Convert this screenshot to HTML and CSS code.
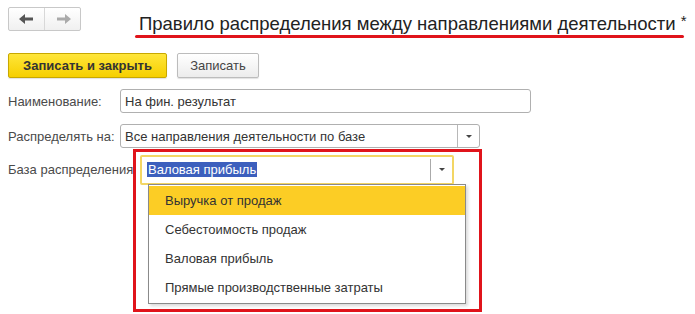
FILE: index.html
```html
<!DOCTYPE html>
<html lang="ru">
<head>
<meta charset="utf-8">
<link rel="stylesheet" href="styles.css">
</head>
<body>
<div class="page">
  <div class="header">
    <div class="nav">
      <div class="nav-btn">
        <svg width="16" height="10" viewBox="0 0 16 10"><path d="M0 5 L6 0 L6 3.5 L14 3.5 L14 6.5 L6 6.5 L6 10 Z" fill="#555"/></svg>
      </div>
      <div class="nav-btn">
        <svg width="16" height="10" viewBox="0 0 16 10"><path d="M16 5 L10 0 L10 3.5 L2 3.5 L2 6.5 L10 6.5 L10 10 Z" fill="#aaa"/></svg>
      </div>
    </div>
    <div class="title">Правило распределения между направлениями деятельности <span class="star">*</span></div>
  </div>
  <div class="toolbar">
    <button class="btn btn-primary">Записать и закрыть</button>
    <button class="btn">Записать</button>
  </div>
  <div class="form">
    <div class="row">
      <div class="label">Наименование:</div>
      <div class="input input-name">На фин. результат</div>
    </div>
    <div class="row">
      <div class="label">Распределять на:</div>
      <div class="input input-select">
        <span class="value">Все направления деятельности по базе</span>
        <span class="drop"><span class="tri"></span></span>
      </div>
    </div>
    <div class="row row-base">
      <div class="label label-base">База распределения</div>
      <div class="focus-wrap">
        <div class="input input-focus">
          <span class="value"><span class="sel">Валовая прибыль</span></span>
          <span class="drop"><span class="tri"></span></span>
        </div>
        <ul class="list">
          <li class="item active">Выручка от продаж</li>
          <li class="item">Себестоимость продаж</li>
          <li class="item">Валовая прибыль</li>
          <li class="item">Прямые производственные затраты</li>
        </ul>
      </div>
      <div class="annot"></div>
    </div>
  </div>
</div>
</body>
</html>
```

FILE: styles.css
```css
* { box-sizing: border-box; }
html, body { margin: 0; padding: 0; background: #fff; }
body {
  font-family: "Liberation Sans", Arial, sans-serif;
  font-size: 13px;
  color: #444;
  width: 695px;
  height: 314px;
  overflow: hidden;
}
.page { padding: 7px 8px 0 8px; }
.header { display: flex; align-items: flex-start; height: 46px; }
.nav {
  display: flex;
  width: 73px;
  height: 24px;
  border: 1px solid #c8c8c8;
  border-radius: 2px;
  background: linear-gradient(#ffffff, #f0f0f0);
}
.nav-btn {
  flex: 1;
  display: flex;
  align-items: center;
  justify-content: center;
}
.nav-btn + .nav-btn { border-left: 1px solid #d8d8d8; }
.title {
  margin-left: 58px;
  margin-top: 3px;
  font-size: 18.5px;
  color: #222;
  line-height: 22px;
  position: relative;
  white-space: nowrap;
}
.title::after {
  content: "";
  position: absolute;
  left: -4px;
  right: 2px;
  bottom: -3px;
  height: 3px;
  background: #e0141b;
  border-radius: 2px;
}
.star { font-size: 15px; vertical-align: 4px; }
.toolbar { display: flex; gap: 10px; height: 36px; }
.btn {
  height: 25px;
  padding: 0 11px;
  border: 1px solid #bcbcbc;
  border-radius: 2px;
  background: linear-gradient(#ffffff, #ececec);
  font-family: inherit;
  font-size: 13px;
  color: #444;
  box-shadow: 0 1px 1px rgba(0,0,0,0.12);
}
.btn-primary {
  width: 159px;
  font-weight: bold;
  color: #333;
  border-color: #c8a800;
  background: linear-gradient(#ffe63a, #f6cf00);
}
.btn:not(.btn-primary) { width: 82px; }
.form { display: flex; flex-direction: column; gap: 11px; }
.row { display: flex; align-items: center; height: 24px; position: relative; }
.label { width: 112px; color: #4a4a4a; white-space: nowrap; }
.input {
  height: 24px;
  border: 1px solid #b0b0b0;
  border-radius: 3px;
  background: #fff;
  color: #333;
  display: flex;
  align-items: center;
  padding-left: 4px;
}
.input-name { width: 411px; }
.input-select { width: 360px; padding-right: 0; }
.value { flex: 1; white-space: nowrap; overflow: hidden; }
.drop {
  width: 22px;
  height: 100%;
  border-left: 1px solid #b8b8b8;
  display: flex;
  align-items: center;
  justify-content: center;
}
.tri {
  width: 0; height: 0;
  border-left: 3px solid transparent;
  border-right: 3px solid transparent;
  border-top: 3px solid #444;
}
.row-base { height: 29px; margin-top: -4px; }
.label-base { width: 132px; overflow: hidden; }
.focus-wrap { position: relative; }
.input-focus {
  width: 314px;
  height: 30px;
  border: 2px solid #f3d664;
  border-radius: 2px;
  padding-left: 5px;
}
.input-focus .drop { border-left-color: #aaa; height: 22px; width: 22px; }
.sel { background: #3c5fbd; color: #fff; padding: 1px 1px; }
.list {
  position: absolute;
  top: 29px;
  left: 8px;
  width: 318px;
  margin: 0;
  padding: 1px 0;
  list-style: none;
  background: #fff;
  border: 1px solid #8a8a8a;
  box-shadow: 2px 2px 3px rgba(0,0,0,0.15);
}
.item {
  height: 29px;
  line-height: 29px;
  padding-left: 16px;
  color: #333;
}
.item.active { background: #fccd25; }
.annot {
  position: absolute;
  left: 125px;
  top: -6px;
  width: 349px;
  height: 163px;
  border: 3px solid #e0141b;
  pointer-events: none;
}
```
